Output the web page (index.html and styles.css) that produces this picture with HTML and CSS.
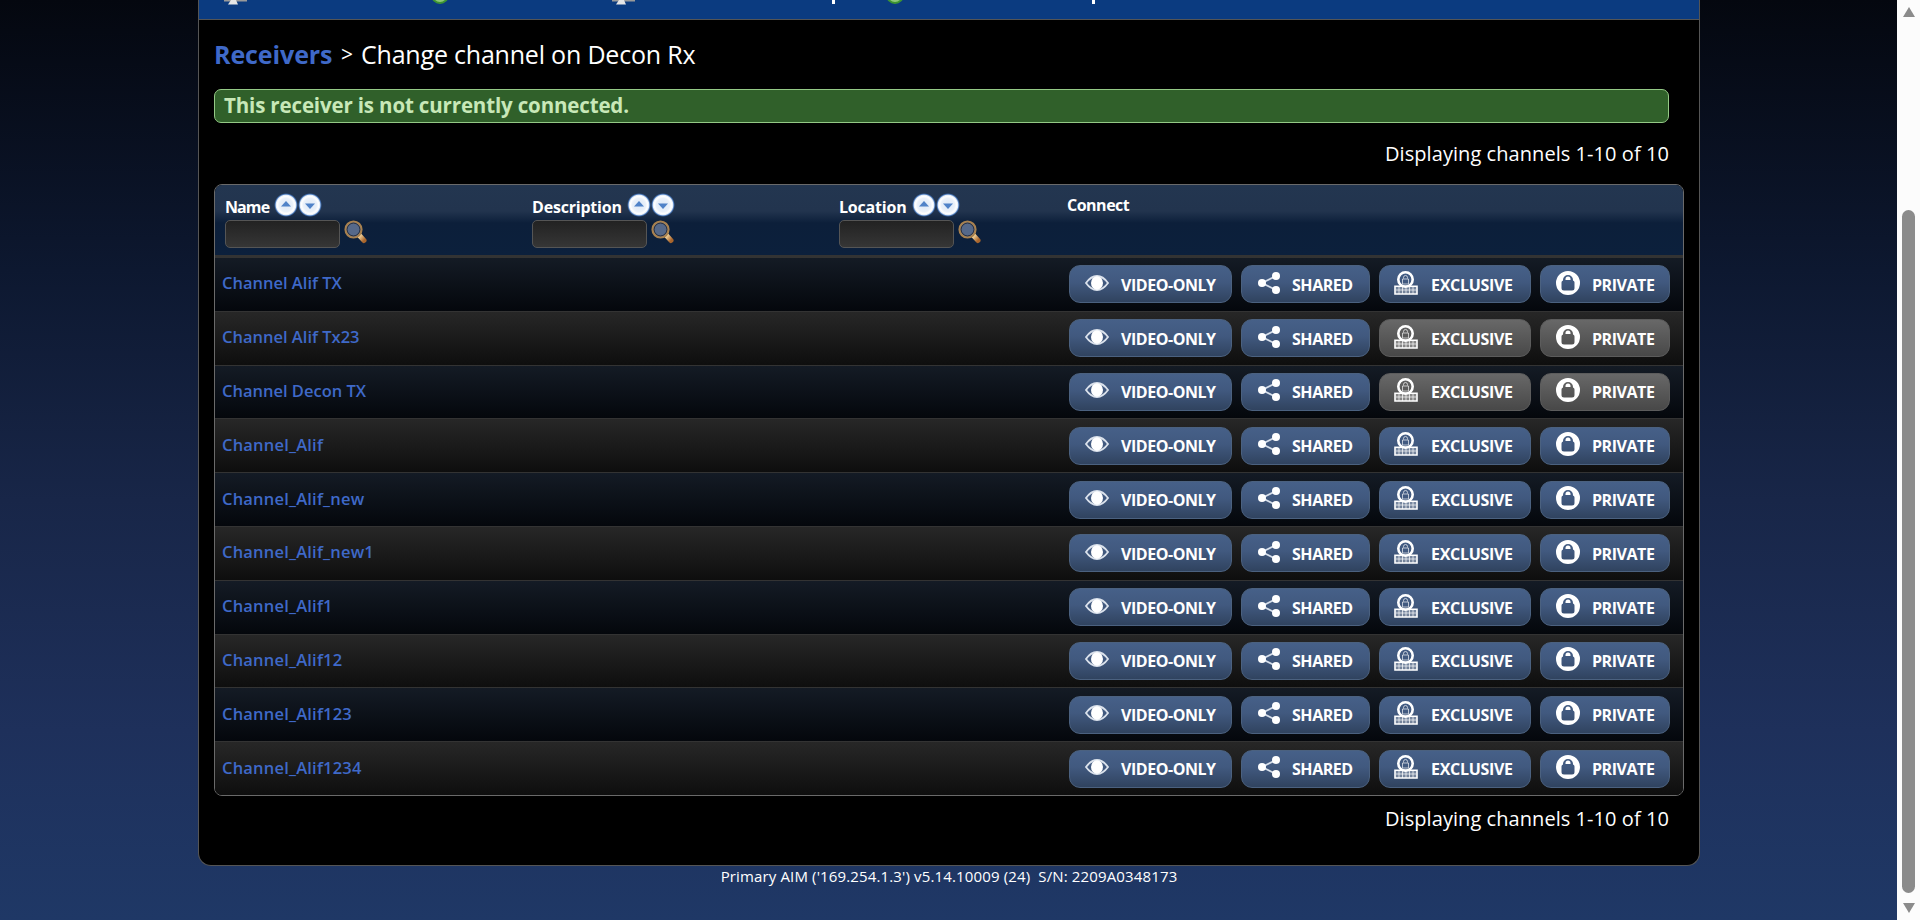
FILE: index.html
```html
<!DOCTYPE html>
<html lang="en">
<head>
<meta charset="utf-8">
<title>Change channel</title>
<link rel="stylesheet" href="styles.css">
</head>
<body>
<svg class="defs" width="0" height="0">
  <defs>
    <linearGradient id="handle" x1="0" y1="0" x2="1" y2="1"><stop offset="0" stop-color="#f7dba2"/><stop offset="1" stop-color="#a9652c"/></linearGradient>
    <radialGradient id="ball"><stop offset="0" stop-color="#dbe7f6"/><stop offset=".55" stop-color="#eaf1fa"/><stop offset=".72" stop-color="#ffffff"/><stop offset=".82" stop-color="#e4edf8"/><stop offset=".9" stop-color="#4f7dbd"/><stop offset="1" stop-color="#2e5a9c" stop-opacity="0"/></radialGradient>
  </defs>
  <symbol id="up" viewBox="0 0 24 24"><circle cx="12" cy="12" r="12" fill="url(#ball)"/><path d="M12 8l5 5.500H7z" fill="#4f82c8"/></symbol>
  <symbol id="down" viewBox="0 0 24 24"><circle cx="12" cy="12" r="12" fill="url(#ball)"/><path d="M12 16l5-5.500H7z" fill="#4f82c8"/></symbol>
  <symbol id="search" viewBox="0 0 24 24"><path d="M15.500 15.500l4.500 5" stroke="url(#handle)" stroke-width="5" stroke-linecap="round"/><circle cx="9.500" cy="9.500" r="8" fill="#56698a" stroke="#a8814f" stroke-width="2.200"/><circle cx="9.500" cy="9.500" r="6.400" fill="none" stroke="#2b3242" stroke-width="1"/></symbol>
  <symbol id="eye" viewBox="0 0 24 16"><path d="M1 8Q6 1 12 1T23 8Q18 15 12 15T1 8z" fill="none" stroke="#dbe2ec" stroke-width="1.800"/><ellipse cx="12" cy="8" rx="6" ry="6.800" fill="#fff"/></symbol>
  <symbol id="share" viewBox="0 0 22 22"><path d="M18 4L4 11l14 7" fill="none" stroke="#d5deea" stroke-width="1.800"/><g fill="#fff"><circle cx="18" cy="4" r="4"/><circle cx="4" cy="11" r="4"/><circle cx="18" cy="18" r="4"/></g></symbol>
  <symbol id="exclusive" viewBox="0 0 24 24"><circle cx="11.500" cy="8.500" r="7.200" fill="none" stroke="#fff" stroke-width="2.600"/><path d="M9.500 7.500V6.500a2 2 0 0 1 4 0v1M8.500 8h6v5h-6z" fill="none" stroke="#fff" stroke-opacity=".65"/><path d="M1 15.200h22v7.800H1z" fill="#fff" fill-opacity=".3" stroke="#fff" stroke-width="1.600"/><path d="M2 19h20M5 16v7M8.500 16v7M12 16v7M15.500 16v7M19 16v7" stroke="#fff" stroke-opacity=".7"/></symbol>
  <symbol id="private" viewBox="0 0 24 24"><path fill-rule="evenodd" fill="#fff" d="M12 0a12 12 0 1 0 0 24a12 12 0 1 0 0-24zM7 9.500V9a5 5 0 0 1 10 0v.500q1.500.500 1.500 2V17q0 2.500-2.500 2.500H8q-2.500 0-2.500-2.500v-5.500q0-1.500 1.500-2zM9.500 9h5V8a2.500 2.500 0 0 0-5 0z"/></symbol>
  <symbol id="screen" viewBox="0 0 26 6"><path d="M0 0h23v1.500H0z" fill="#9a9a9a"/><path d="M7 0h5l2 4.500H4z" fill="#e6e6e6"/></symbol>
</svg>
<div class="page">
  <div class="frame">
    <nav class="nav">
      <svg class="nav-screen s1"><use href="#screen"/></svg><i class="dot d1"></i>
      <svg class="nav-screen s2"><use href="#screen"/></svg><i class="stem p1"></i><i class="dot d2"></i><i class="stem p2"></i>
    </nav>
    <main class="content">
      <h1 class="title"><a class="crumb">Receivers</a><span class="sep">&gt;</span><span class="now">Change channel on Decon Rx</span></h1>
      <div class="notice"><span class="notice-text">This receiver is not currently connected.</span></div>
      <div class="count top"><span>Displaying channels 1-10 of 10</span></div>
      <section class="table">
        <header class="head">
          <div class="col name"><div class="label"><b class="l1">Name</b><svg><use href="#up"/></svg><svg><use href="#down"/></svg></div><div class="find"><input class="field" aria-label="Name"><svg><use href="#search"/></svg></div></div>
          <div class="col desc"><div class="label"><b class="l2">Description</b><svg><use href="#up"/></svg><svg><use href="#down"/></svg></div><div class="find"><input class="field" aria-label="Description"><svg><use href="#search"/></svg></div></div>
          <div class="col loc"><div class="label"><b class="l3">Location</b><svg><use href="#up"/></svg><svg><use href="#down"/></svg></div><div class="find"><input class="field" aria-label="Location"><svg><use href="#search"/></svg></div></div>
          <div class="col conn"><b>Connect</b></div>
        </header>
        <div class="rows" id="rows"></div>
      </section>
      <div class="count bottom"><span>Displaying channels 1-10 of 10</span></div>
    </main>
  </div>
  <footer class="foot"><span>Primary AIM ('169.254.1.3') v5.14.10009 (24)&nbsp; S/N: 2209A0348173</span></footer>
</div>
<aside class="bar"><svg class="tip" viewBox="0 0 16 14"><path d="M8 2l6 10H2z"/></svg><i class="thumb"></i><svg class="tip" viewBox="0 0 16 14"><path d="M8 12l6-10H2z"/></svg></aside>
<script src="rows.js"></script>
</body>
</html>
```
FILE: styles.css
```css
* { box-sizing: border-box; }
body { margin: 0; height: 920px; overflow: hidden; display: flex; color: #fff; font-family: "Trebuchet MS", "Open Sans", "Noto Sans", sans-serif; background: linear-gradient(#04070f 0, #0d1830 270px, #182648 500px, #1e305b 730px, #1f3866 920px); }
.defs { position: absolute; }
.page { width: 1897px; padding-left: 198px; }
.frame { width: 1502px; height: 866px; background: #000; border: 1px solid #555; border-top: 0; border-radius: 0 0 13px 13px; }
.nav { position: relative; height: 20px; background: #0b3b80; border-bottom: 1px solid #555; }
.nav-screen { position: absolute; top: 0; width: 26px; height: 6px; }
.s1 { left: 25px; } .s2 { left: 413px; }
.dot { position: absolute; top: -14px; width: 18px; height: 18px; border-radius: 50%; background: #8fc878; border: 2px solid #3d9431; }
.d1 { left: 232px; } .d2 { left: 687px; }
.stem { position: absolute; top: 0; width: 3px; height: 4px; background: #fff; }
.p1 { left: 633px; } .p2 { left: 893px; }
.content { padding: 0 15px; }
.title { display: flex; margin: 0; height: 69px; line-height: 69px; font-size: 25px; font-weight: 500; white-space: nowrap; }
.crumb { width: 127px; font-weight: 700; letter-spacing: -.1px; color: #3f69c8; }
.sep { width: 20px; font-size: 21px; }
.now { letter-spacing: -.2px; }
.notice { width: 1455px; height: 34px; padding-left: 9px; line-height: 31px; font-size: 20.500px; font-weight: 700; letter-spacing: -.15px; color: #c8e8b8; background: #30602a; border: 1px solid #94c986; border-radius: 7px; }
.count { width: 1455px; height: 61px; line-height: 61px; text-align: right; font-size: 20px; font-weight: 500; letter-spacing: .06px; }
.table { width: 1470px; height: 612px; border: 1px solid #6a6a6a; border-radius: 8px; overflow: hidden; }
.head { display: flex; height: 73px; padding-left: 10px; font-size: 16px; border-bottom: 3px solid #333; background: linear-gradient(#233650 0, #22344e 26px, #0c1f3a 38px, #0c203c 100%); }
.head b { font-weight: 700; letter-spacing: -.2px; }
.name, .desc { width: 307px; } .loc { width: 228px; }
.label { display: flex; height: 35px; padding-top: 8px; line-height: 28px; }
.label b { white-space: nowrap; }
.head .l1 { width: 49px; letter-spacing: -.9px; } .l2 { width: 95px; } .l3 { width: 73px; }
.label svg { width: 24px; height: 24px; }
.find { display: flex; gap: 4px; }
.field { width: 115px; height: 28px; padding: 0; background: linear-gradient(#222, #363636); border: 1px solid #555; border-radius: 5px; }
.find svg { width: 24px; height: 24px; }
.conn { line-height: 40px; }
.head .conn b { letter-spacing: -.5px; }
.row { display: flex; align-items: center; height: 53.8px; padding: 0 13px 0 7px; border-bottom: 1px solid #333; background: linear-gradient(#141b25, #04070c); }
.row:nth-child(even) { background: linear-gradient(#272727, #0e0e0e); }
.row:nth-child(n+4) .link { letter-spacing: .2px; }
.link { width: 848px; margin-top: -3px; font-size: 16.500px; font-weight: 650; color: #3f69c8; white-space: nowrap; }
.btns { display: flex; gap: 9px; }
.btn { display: flex; align-items: center; height: 38px; border: 1px solid #4b617f; border-radius: 11px; background: linear-gradient(#466088, #41597f 45%, #30435f); font-size: 16px; font-weight: 700; letter-spacing: -.45px; white-space: nowrap; }
.btn.off { border-color: #5c5c5c; background: linear-gradient(#686868, #484848); }
.btn span { margin-top: 1px; }
.btn svg { height: 24px; margin-top: -3px; }
.view { width: 163px; padding-left: 15px; } .view svg { width: 24px; height: 16px; margin-right: 12px; }
.shared { width: 129px; padding-left: 16px; } .shared svg { width: 22px; height: 22px; margin-right: 12px; }
.excl { width: 152px; padding-left: 14px; letter-spacing: -.3px; } .excl svg { width: 24px; margin-right: 13px; }
.priv { width: 130px; padding-left: 15px; } .priv svg { width: 24px; margin-right: 12px; }
.bottom { height: 50px; line-height: 46px; }
.foot { width: 1502px; text-align: center; font-size: 15px; line-height: 21px; font-weight: 500; letter-spacing: .14px; }
.bar { width: 23px; display: flex; flex-direction: column; align-items: center; background: #fcfcfc; }
.tip { width: 16px; height: 14px; margin-top: 5px; fill: #8b8b8b; }
.thumb { width: 13px; height: 683px; margin: 191px 0 3px; border-radius: 7px; background: #8b8b8b; }
```
FILE: rows.js
```js
const channels = ["Channel Alif TX", "Channel Alif Tx23", "Channel Decon TX", "Channel_Alif", "Channel_Alif_new", "Channel_Alif_new1", "Channel_Alif1", "Channel_Alif12", "Channel_Alif123", "Channel_Alif1234"];
const modes = [["view", "eye", "VIDEO-ONLY"], ["shared", "share", "SHARED"], ["excl", "exclusive", "EXCLUSIVE"], ["priv", "private", "PRIVATE"]];
document.getElementById("rows").innerHTML = channels.map((name, i) => {
  const buttons = modes.map(([cls, icon, text], m) => {
    const off = (i === 1 || i === 2) && m > 1 ? " off" : "";
    return `<a class="btn ${cls}${off}"><svg><use href="#${icon}"/></svg><span>${text}</span></a>`;
  }).join("");
  return `<div class="row"><a class="link">${name}</a><div class="btns">${buttons}</div></div>`;
}).join("");
```
